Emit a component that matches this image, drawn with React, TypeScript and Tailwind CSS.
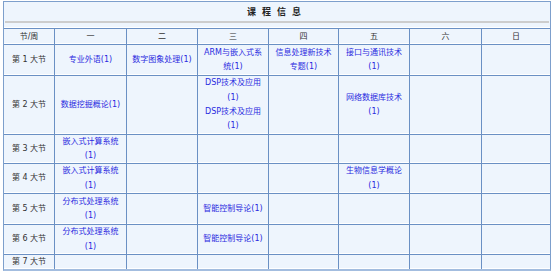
import React from "react";

interface Row {
  label: string;
  height: string;
  cells: string[][];
}

const FONT = '"DejaVu Sans", "Noto Sans CJK SC", sans-serif';

const days = ["一", "二", "三", "四", "五", "六", "日"];

// each cell: array of course names (stacked)
const rows: Row[] = [
  {
    label: "第 1 大节",
    height: "h-[31px]",
    cells: [["专业外语(1)"], ["数字图象处理(1)"], ["ARM与嵌入式系统(1)"], ["信息处理新技术专题(1)"], ["接口与通讯技术(1)"], [], []],
  },
  {
    label: "第 2 大节",
    height: "h-[59px]",
    cells: [["数据挖掘概论(1)"], [], ["DSP技术及应用(1)", "DSP技术及应用(1)"], [], ["网络数据库技术(1)"], [], []],
  },
  {
    label: "第 3 大节",
    height: "h-[29px]",
    cells: [["嵌入式计算系统(1)"], [], [], [], [], [], []],
  },
  {
    label: "第 4 大节",
    height: "h-[30px]",
    cells: [["嵌入式计算系统(1)"], [], [], [], ["生物信息学概论(1)"], [], []],
  },
  {
    label: "第 5 大节",
    height: "h-[31px]",
    cells: [["分布式处理系统(1)"], [], ["智能控制导论(1)"], [], [], [], []],
  },
  {
    label: "第 6 大节",
    height: "h-[30px]",
    cells: [["分布式处理系统(1)"], [], ["智能控制导论(1)"], [], [], [], []],
  },
  {
    label: "第 7 大节",
    height: "h-[15px]",
    cells: [[], [], [], [], [], [], []],
  },
];

const gridCols = "grid grid-cols-[50px_72px_71px_71px_70px_71px_72px_69px]";

export default function App() {
  return (
    <div className="w-[553px] h-[271px] bg-white pt-[1px] pl-[3px]" style={{ fontFamily: FONT }}>
      <div className="w-[548px] border border-[#7d9fcc] border-b-2 border-b-[#a3bddf] bg-[#eef5fd]">
        {/* titulo */}
        <div className="h-[26px] flex flex-col shadow-[inset_0_-1px_0_#ffffff]">
          <div className="h-[19px] flex items-center justify-center pt-[2px]">
            <span className="text-[9px] font-bold tracking-[6px] text-[#222] leading-none">课程信息</span>
          </div>
          <div className="mx-[1px] h-[2px] bg-[#cdcdcd]" />
        </div>

        {/* cabecera */}
        <div className={`${gridCols} h-[16px] border-t border-[#6a90c4] text-[8px] text-[#333] shadow-[inset_0_-1px_0_#ffffff]`}>
          <div className="flex items-center justify-center">节/周</div>
          {days.map((d) => (
            <div key={d} className="flex items-center justify-center border-l border-[#6a90c4]">
              {d}
            </div>
          ))}
        </div>

        {rows.map((row) => (
          <div
            key={row.label}
            className={`${gridCols} ${row.height} border-t border-[#6a90c4] text-[8px] leading-[14.3px] shadow-[inset_0_-1px_0_#ffffff]`}
          >
            <div className="flex items-center justify-center text-[#333] whitespace-pre">{row.label}</div>
            {row.cells.map((cell, i) => (
              <div
                key={i}
                className="flex flex-col items-center justify-center border-l border-[#6a90c4] px-[4px] text-center text-[#2a2ae0]"
              >
                {cell.map((c, j) => (
                  <div key={j}>{c}</div>
                ))}
              </div>
            ))}
          </div>
        ))}
      </div>
    </div>
  );
}
